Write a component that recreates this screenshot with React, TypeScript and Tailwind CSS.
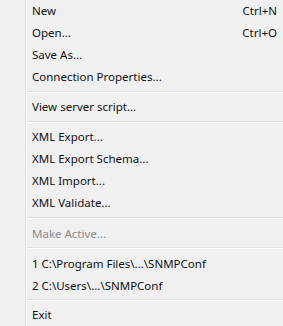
type Item = { label: string; shortcut?: string; disabled?: boolean } | 'sep';

const items: Item[] = [
  { label: 'New', shortcut: 'Ctrl+N' },
  { label: 'Open...', shortcut: 'Ctrl+O' },
  { label: 'Save As...' },
  { label: 'Connection Properties...' },
  'sep',
  { label: 'View server script...' },
  'sep',
  { label: 'XML Export...' },
  { label: 'XML Export Schema...' },
  { label: 'XML Import...' },
  { label: 'XML Validate...' },
  'sep',
  { label: 'Make Active...', disabled: true },
  'sep',
  { label: '1 C:\\Program Files\\...\\SNMPConf' },
  { label: '2 C:\\Users\\...\\SNMPConf' },
  'sep',
  { label: 'Exit' },
];

// separator heights, in order
const sepHeights = ['h-[8px]', 'h-[9px]', 'h-[9px]', 'h-[9px]', 'h-[8px]'];

export default function App() {
  let sepIndex = 0;

  return (
    <div
      className="flex h-[326px] w-[283px] overflow-hidden bg-[#f0f0f0] text-[11.5px] text-[#111111]"
      style={{ fontFamily: '"Noto Sans", "Open Sans", sans-serif' }}
    >
      {/* icon gutter */}
      <div className="w-[26px] shrink-0 border-r border-[#e2e3e3]" />
      <div className="w-px shrink-0 bg-white" />

      <div className="flex flex-1 flex-col">
        {items.map((item, i) => {
          if (item === 'sep') {
            const h = sepHeights[sepIndex++];
            return (
              <div key={i} className={`flex items-center ${h}`}>
                <div className="w-full border-t border-b border-t-[#e0e0e0] border-b-white" />
              </div>
            );
          }
          return (
            <div
              key={i}
              className={`flex h-[22px] shrink-0 items-center justify-between pl-[5px] pr-[6px] ${
                item.disabled ? 'text-[#8d8d8d]' : ''
              }`}
            >
              <span>{item.label}</span>
              {item.shortcut && <span>{item.shortcut}</span>}
            </div>
          );
        })}
      </div>
    </div>
  );
}
